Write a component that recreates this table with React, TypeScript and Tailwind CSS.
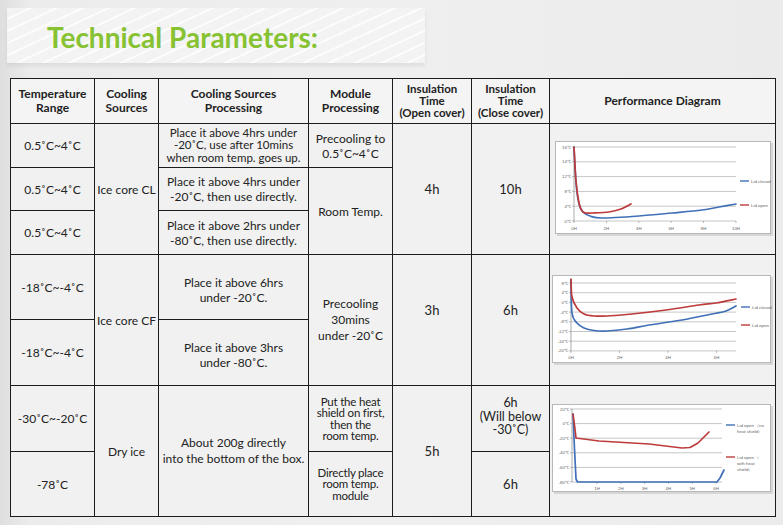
import type { ReactNode } from "react"

type Pt = [number, number]

const BLUE = "#4070b8"
const RED = "#bd3b3b"

function smoothPath(pts: Pt[]) {
  let d = `M${pts[0][0]},${pts[0][1]}`
  for (let i = 0; i < pts.length - 1; i++) {
    const p0 = pts[i - 1] || pts[i]
    const p1 = pts[i]
    const p2 = pts[i + 1]
    const p3 = pts[i + 2] || p2
    const c1x = p1[0] + (p2[0] - p0[0]) / 6
    const c1y = p1[1] + (p2[1] - p0[1]) / 6
    const c2x = p2[0] - (p3[0] - p1[0]) / 6
    const c2y = p2[1] - (p3[1] - p1[1]) / 6
    d += ` C${c1x},${c1y} ${c2x},${c2y} ${p2[0]},${p2[1]}`
  }
  return d
}

function linePath(pts: Pt[]) {
  return pts.map((p, i) => `${i ? "L" : "M"}${p[0]},${p[1]}`).join(" ")
}

type ChartProps = {
  w: number
  h: number
  axisX: number
  gridRight: number
  grid: { y: number; label: string }[]
  xLabels: { x: number; label: string }[]
  xLabelY: number
  series: { color: string; d: string }[]
  legend: { color: string; y: number; x: number; lines: string[] }[]
}

function Chart({ w, h, axisX, gridRight, grid, xLabels, xLabelY, series, legend }: ChartProps) {
  const bottom = grid[grid.length - 1].y
  return (
    <svg width={w + 3} height={h + 3} viewBox={`0 0 ${w + 3} ${h + 3}`} className="block">
      <rect x={2} y={2} width={w} height={h} fill="#d6d6d6" />
      <rect x={0.5} y={0.5} width={w - 1} height={h - 1} fill="#ffffff" stroke="#b8b8b8" strokeWidth={1} />
      {grid.map((g) => (
        <g key={g.label}>
          <line x1={axisX} x2={gridRight} y1={g.y} y2={g.y} stroke="#a0a0a0" strokeWidth={0.6} />
          <line x1={axisX - 2} x2={axisX} y1={g.y} y2={g.y} stroke="#888" strokeWidth={0.6} />
          <text x={axisX - 3} y={g.y + 1.5} fontSize={4.4} textAnchor="end" fill="#666" fontFamily="'Liberation Sans', sans-serif">
            {g.label}
          </text>
        </g>
      ))}
      <line x1={axisX} x2={axisX} y1={grid[0].y} y2={bottom} stroke="#888" strokeWidth={0.7} />
      {xLabels.map((l) => (
        <g key={l.label}>
          <line x1={l.x} x2={l.x} y1={bottom} y2={bottom + 2} stroke="#888" strokeWidth={0.6} />
          <text x={l.x} y={xLabelY} fontSize={4.4} textAnchor="middle" fill="#666" fontFamily="'Liberation Sans', sans-serif">
            {l.label}
          </text>
        </g>
      ))}
      {series.map((s, i) => (
        <path key={i} d={s.d} fill="none" stroke={s.color} strokeWidth={1.7} strokeLinejoin="round" strokeLinecap="round" />
      ))}
      {legend.map((l, i) => (
        <g key={i}>
          <line x1={l.x} x2={l.x + 9} y1={l.y} y2={l.y} stroke={l.color} strokeWidth={1.4} />
          {l.lines.map((t, j) => (
            <text key={j} x={l.x + 11} y={l.y + 1.5 + j * 6} fontSize={4.4} fill="#666" fontFamily="'Liberation Sans', sans-serif">
              {t}
            </text>
          ))}
        </g>
      ))}
    </svg>
  )
}

const chartOne = (
  <Chart
    w={216}
    h={93}
    axisX={19}
    gridRight={181}
    grid={["16℃", "14℃", "12℃", "8℃", "4℃", "0℃"].map((label, i) => ({ label, y: 6 + i * 14.8 }))}
    xLabels={["0H", "2H", "4H", "6H", "8H", "10H"].map((label, i) => ({ label, x: 19 + i * 32.4 }))}
    xLabelY={89}
    series={[
      {
        color: BLUE,
        d: smoothPath([[19, 6], [21, 42], [24, 63], [28, 71], [35, 75], [47, 77], [84, 75], [117, 72], [147, 69], [164, 66], [181, 63]]),
      },
      {
        color: RED,
        d: smoothPath([[19, 6], [21, 40], [24, 62], [27, 70], [31, 72], [37, 72], [54, 71], [66, 68], [76, 63]]),
      },
    ]}
    legend={[
      { color: BLUE, x: 185, y: 40, lines: ["Lid closed"] },
      { color: RED, x: 185, y: 64, lines: ["Lid open"] },
    ]}
  />
)

const chartTwo = (
  <Chart
    w={219}
    h={88}
    axisX={19}
    gridRight={184}
    grid={["8℃", "4℃", "0℃", "-4℃", "-8℃", "-12℃", "-16℃", "-20℃"].map((label, i) => ({ label, y: 8 + i * 9.7 }))}
    xLabels={["0H", "2H", "4H", "6H"].map((label, i) => ({ label, x: 19 + i * 48.5 }))}
    xLabelY={84}
    series={[
      {
        color: BLUE,
        d: smoothPath([[19, 5], [20, 38], [25, 48], [32, 53], [42, 55.5], [55, 56], [75, 54], [97, 50], [130, 45], [160, 39], [174, 36], [184, 31]]),
      },
      {
        color: RED,
        d: smoothPath([[19, 4], [20, 22], [25, 33], [32, 39], [42, 41], [55, 41], [80, 39], [114, 35], [147, 30], [164, 28], [184, 24]]),
      },
    ]}
    legend={[
      { color: BLUE, x: 189, y: 32, lines: ["Lid closed"] },
      { color: RED, x: 189, y: 50, lines: ["Lid open"] },
    ]}
  />
)

const chartThree = (
  <Chart
    w={219}
    h={88}
    axisX={20}
    gridRight={170}
    grid={["20℃", "0℃", "-20℃", "-40℃", "-60℃", "-80℃"].map((label, i) => ({ label, y: 5 + i * 14.6 }))}
    xLabels={["1H", "2H", "3H", "4H", "5H", "6H"].map((label, i) => ({ label, x: 45 + i * 23.8 }))}
    xLabelY={86}
    series={[
      { color: BLUE, d: linePath([[21, 10], [22.5, 45], [24, 75], [25.5, 78], [165, 78], [168, 74], [172, 66]]) },
      { color: RED, d: linePath([[21, 10], [23, 25], [24, 34], [47, 37], [97, 40], [130, 44], [138, 43.5], [146, 39], [157, 28]]) },
    ]}
    legend={[
      { color: BLUE, x: 174, y: 21, lines: ["Lid open （no", "heat shield）"] },
      { color: RED, x: 174, y: 53, lines: ["Lid open （", "with heat", "shield）"] },
    ]}
  />
)

function Td({
  children,
  rowSpan,
  className = "",
}: {
  children?: ReactNode
  rowSpan?: number
  className?: string
}) {
  return (
    <td rowSpan={rowSpan} className={`border border-[#1c1c1c] bg-[#f1f1f1] p-0 text-center align-middle ${className}`}>
      {children}
    </td>
  )
}

function Th({ children }: { children: ReactNode }) {
  return (
    <th className="border border-[#1c1c1c] bg-[#f4f4f4] p-0 text-center align-middle text-[12px] font-bold leading-[14px] text-[#222]">
      {children}
    </th>
  )
}

export default function App() {
  return (
    <div className="w-[783px] h-[525px] overflow-hidden bg-[linear-gradient(90deg,#dedede_0px,#ececec_30px,#efefef_400px,#ebebeb_783px)] font-['Lato','Open_Sans',sans-serif] text-[#222]">
      <div className="pt-[8px] pl-[7px]">
        <div className="w-[418px] h-[55px] flex items-center pl-[40px] bg-[repeating-linear-gradient(155deg,#f3f3f3_0px,#f3f3f3_9px,#fcfcfc_9px,#fcfcfc_11px)] shadow-[0_3px_4px_rgba(0,0,0,0.07)]">
          <h1 className="text-[28px] font-bold text-[#86c232] leading-none pt-[2px]">Technical Parameters:</h1>
        </div>
      </div>

      <div className="pt-[15px] pl-[10px]">
        <table className="table-fixed border-collapse w-[765px] text-[12px] leading-[13px]">
          <colgroup>
            <col className="w-[84px]" />
            <col className="w-[64px]" />
            <col className="w-[150px]" />
            <col className="w-[84px]" />
            <col className="w-[79px]" />
            <col className="w-[78px]" />
            <col className="w-[226px]" />
          </colgroup>
          <thead>
            <tr className="h-[45px]">
              <Th>
                Temperature
                <br />
                Range
              </Th>
              <Th>
                Cooling
                <br />
                Sources
              </Th>
              <Th>
                Cooling Sources
                <br />
                Processing
              </Th>
              <Th>
                Module
                <br />
                Processing
              </Th>
              <Th>
                <span className="block text-[11.5px] leading-[12px]">
                  Insulation
                  <br />
                  Time
                  <br />
                  (Open cover)
                </span>
              </Th>
              <Th>
                <span className="block text-[11.5px] leading-[12px]">
                  Insulation
                  <br />
                  Time
                  <br />
                  (Close cover)
                </span>
              </Th>
              <Th>Performance Diagram</Th>
            </tr>
          </thead>
          <tbody>
            <tr className="h-[44px]">
              <Td>0.5˚C~4˚C</Td>
              <Td rowSpan={3}>Ice core CL</Td>
              <Td className="text-[11.5px] leading-[12.5px]">
                Place it above 4hrs under
                <br />
                -20˚C, use after 10mins
                <br />
                when room temp. goes up.
              </Td>
              <Td className="leading-[15px]">
                Precooling to
                <br />
                0.5˚C~4˚C
              </Td>
              <Td rowSpan={3} className="text-[13px]">4h</Td>
              <Td rowSpan={3} className="text-[13px]">10h</Td>
              <Td rowSpan={3}>
                <div className="flex justify-center pl-[3px]">{chartOne}</div>
              </Td>
            </tr>
            <tr className="h-[43px]">
              <Td>0.5˚C~4˚C</Td>
              <Td className="leading-[15px]">
                Place it above 4hrs under
                <br />
                -20˚C, then use directly.
              </Td>
              <Td rowSpan={2}>Room Temp.</Td>
            </tr>
            <tr className="h-[44px]">
              <Td>0.5˚C~4˚C</Td>
              <Td className="leading-[15px]">
                Place it above 2hrs under
                <br />
                -80˚C, then use directly.
              </Td>
            </tr>

            <tr className="h-[65px]">
              <Td>-18˚C~-4˚C</Td>
              <Td rowSpan={2}>Ice core CF</Td>
              <Td className="leading-[15px] pt-[6px]">
                Place it above 6hrs
                <br />
                under -20˚C.
              </Td>
              <Td rowSpan={2} className="leading-[16px]">
                Precooling
                <br />
                30mins
                <br />
                under -20˚C
              </Td>
              <Td rowSpan={2} className="text-[13px]">
                <span className="block pb-[20px]">3h</span>
              </Td>
              <Td rowSpan={2} className="text-[13px]">
                <span className="block pb-[20px]">6h</span>
              </Td>
              <Td rowSpan={2}>
                <div className="flex justify-center">{chartTwo}</div>
              </Td>
            </tr>
            <tr className="h-[66px]">
              <Td>-18˚C~-4˚C</Td>
              <Td className="leading-[15px] pt-[4px]">
                Place it above 3hrs
                <br />
                under -80˚C.
              </Td>
            </tr>

            <tr className="h-[66px]">
              <Td>-30˚C~-20˚C</Td>
              <Td rowSpan={2}>Dry ice</Td>
              <Td rowSpan={2} className="leading-[16px]">
                About 200g directly
                <br />
                into the bottom of the box.
              </Td>
              <Td className="text-[11.5px] leading-[11.5px] tracking-[-0.2px]">
                Put the heat
                <br />
                shield on first,
                <br />
                then the
                <br />
                room temp.
              </Td>
              <Td rowSpan={2} className="text-[13px]">5h</Td>
              <Td className="text-[12.5px] leading-[13.5px] pb-[4px]">
                6h
                <br />
                (Will below
                <br />
                -30˚C)
              </Td>
              <Td rowSpan={2}>
                <div className="flex justify-center pb-[4px]">{chartThree}</div>
              </Td>
            </tr>
            <tr className="h-[65px]">
              <Td>-78˚C</Td>
              <Td className="text-[11.5px] leading-[11.5px] tracking-[-0.2px]">
                Directly place
                <br />
                room temp.
                <br />
                module
              </Td>
              <Td className="text-[13px]">6h</Td>
            </tr>
          </tbody>
        </table>
      </div>
    </div>
  )
}
